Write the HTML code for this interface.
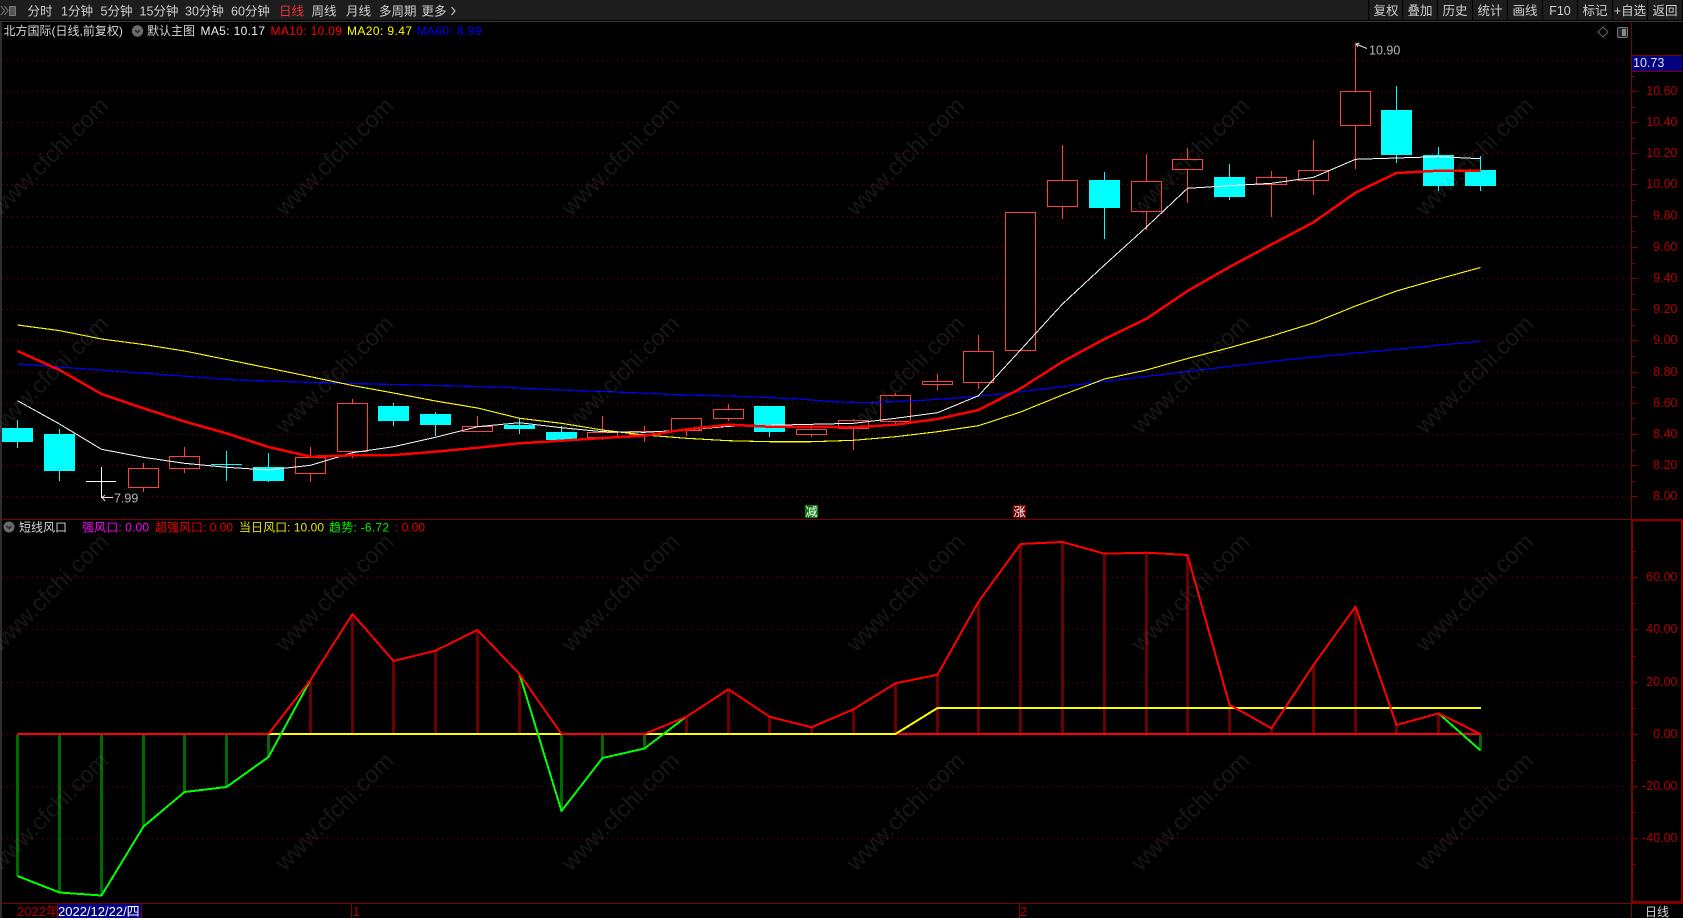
<!DOCTYPE html>
<html lang="zh">
<head>
<meta charset="utf-8">
<title>北方国际 日线</title>
<style>
html,body{margin:0;padding:0;background:#000;width:1683px;height:918px;overflow:hidden}
svg{display:block;position:absolute;left:0;top:0}
text{font-family:"Liberation Sans","Noto Sans CJK SC",sans-serif;font-size:12px}
.c{shape-rendering:crispEdges}
.t text{font-size:12.5px}
.a text{font-size:12.5px}
.w text{font-size:23.5px}
</style>
</head>
<body>
<svg width="1683" height="918" viewBox="0 0 1683 918" xmlns="http://www.w3.org/2000/svg">
<rect width="1683" height="918" fill="#000"/>
<!-- toolbar -->
<g class="c">
<rect x="0" y="0" width="1683" height="20" fill="#1d1d1d"/>
<rect x="0" y="20" width="1683" height="1" fill="#000"/>
<rect x="0" y="21" width="1683" height="1" fill="#3a3a3a"/>
<rect x="0" y="22" width="2" height="896" fill="#2e2e2e"/>
<path d="M1368.5 0V20M1402.5 0V20M1437.5 0V20M1472.5 0V20M1507.5 0V20M1542.5 0V20M1577.5 0V20M1612.5 0V20M1647.5 0V20M1682.5 0V20" stroke="#000"/>
</g>
<path d="M1 6L4.500 10.500L1 15M4.500 6L8 10.500L4.500 15" fill="none" stroke="#777" stroke-width="1"/>
<rect x="9.500" y="6.500" width="6" height="9" fill="#555" stroke="#777"/>
<g class="t" fill="#cfcfcf">
<text x="27.500" y="15.500">分时</text>
<text x="61" y="15.500">1分钟</text>
<text x="100.500" y="15.500">5分钟</text>
<text x="139.500" y="15.500">15分钟</text>
<text x="185" y="15.500">30分钟</text>
<text x="231" y="15.500">60分钟</text>
<text x="279" y="15.500" fill="#ee3333">日线</text>
<text x="311.500" y="15.500">周线</text>
<text x="346" y="15.500">月线</text>
<text x="379" y="15.500">多周期</text>
<text x="421.500" y="15.500">更多</text>
</g>
<path d="M451.500 7L455 11L451.500 15" fill="none" stroke="#cfcfcf"/>
<g class="t" fill="#cfcfcf" text-anchor="middle">
<text x="1386" y="15">复权</text>
<text x="1420" y="15">叠加</text>
<text x="1455" y="15">历史</text>
<text x="1490" y="15">统计</text>
<text x="1525" y="15">画线</text>
<text x="1560" y="15">F10</text>
<text x="1595" y="15">标记</text>
<text x="1630" y="15">+自选</text>
<text x="1665" y="15">返回</text>
</g>
<!-- grid -->
<g class="c" stroke="#800000" stroke-dasharray="1 4" fill="none">
<path d="M2 60.500H1631M2 91.500H1631M2 122.500H1631M2 153.500H1631M2 184.500H1631M2 216.500H1631M2 247.500H1631M2 278.500H1631M2 309.500H1631M2 340.500H1631M2 372.500H1631M2 403.500H1631M2 434.500H1631M2 465.500H1631M2 496.500H1631"/>
<path d="M2 577.500H1631M2 629.500H1631M2 682.500H1631M2 734.500H1631M2 786.500H1631M2 838.500H1631"/>
</g>
<!-- frame + axis -->
<g class="c" stroke="#800000" fill="none">
<path d="M0 519.500H1683M0 903.500H1683"/>
<path d="M1631.500 21V520M1631.500 903V918"/>
<rect x="1632" y="520.500" width="50" height="381.500" stroke-width="2"/>
<path d="M1632 91.500h6M1632 122.500h6M1632 153.500h6M1632 184.500h6M1632 216.500h6M1632 247.500h6M1632 278.500h6M1632 309.500h6M1632 340.500h6M1632 372.500h6M1632 403.500h6M1632 434.500h6M1632 465.500h6M1632 496.500h6"/>
<path d="M1632 76.500h3M1632 107.500h3M1632 138.500h3M1632 169.500h3M1632 200.500h3M1632 231.500h3M1632 263.500h3M1632 294.500h3M1632 325.500h3M1632 356.500h3M1632 387.500h3M1632 418.500h3M1632 450.500h3M1632 481.500h3"/>
<path d="M1633 577.500h5M1633 629.500h5M1633 682.500h5M1633 734.500h5M1633 786.500h5M1633 838.500h5"/>
<path d="M1633 551.500h3M1633 603.500h3M1633 656.500h3M1633 708.500h3M1633 760.500h3M1633 812.500h3M1633 864.500h3"/>
</g>
<g class="a" fill="#b00000" text-anchor="end">
<text x="1677.500" y="95">10.60</text>
<text x="1677.500" y="126">10.40</text>
<text x="1677.500" y="157">10.20</text>
<text x="1677.500" y="188">10.00</text>
<text x="1677.500" y="219.500">9.80</text>
<text x="1677.500" y="251">9.60</text>
<text x="1677.500" y="282">9.40</text>
<text x="1677.500" y="313">9.20</text>
<text x="1677.500" y="344">9.00</text>
<text x="1677.500" y="376">8.80</text>
<text x="1677.500" y="407">8.60</text>
<text x="1677.500" y="438">8.40</text>
<text x="1677.500" y="469">8.20</text>
<text x="1677.500" y="500">8.00</text>
<text x="1677.500" y="581">60.00</text>
<text x="1677.500" y="633">40.00</text>
<text x="1677.500" y="686">20.00</text>
<text x="1677.500" y="738">0.00</text>
<text x="1677.500" y="790">-20.00</text>
<text x="1677.500" y="842">-40.00</text>
</g>
<g class="c">
<rect x="1632" y="55" width="50" height="17" fill="#000080"/>
<path d="M1632 55.500H1682M1632 71.500H1682" stroke="#800000"/>
</g>
<text x="1633" y="67" fill="#e0e0e0" style="font-size:12.5px">10.73</text>
<!-- header -->
<text x="3.500" y="35" fill="#d8d8d8">北方国际(日线,前复权)</text>
<circle cx="137.500" cy="31" r="5.700" fill="#6b6b6b"/>
<path d="M135 30L137.500 32.500L140 30" fill="none" stroke="#222" stroke-width="1.300"/>
<text x="147" y="35" fill="#d8d8d8">默认主图</text>
<text x="200.500" y="35" fill="#f0f0f0" textLength="64.500">MA5: 10.17</text>
<text x="270.500" y="35" fill="#ff0000" textLength="71.500">MA10: 10.09</text>
<text x="347" y="35" fill="#ffff00" textLength="65">MA20: 9.47</text>
<text x="416.500" y="35" fill="#0000ff" textLength="65">MA60: 8.99</text>
<path d="M1603 27L1608 32L1603 37L1598 32Z" fill="none" stroke="#666"/>
<rect x="1617.500" y="27.500" width="10" height="10" rx="1.500" fill="#222" stroke="#777"/>
<rect x="1622" y="29" width="4" height="7" fill="#888"/>
<!-- candles: wicks -->
<g class="c" stroke="#00ffff" fill="none">
<path d="M17.500 420V448M59.500 429V481M268.500 453V482M393.500 403V426M435.500 412V436M519.500 418V434M561.500 426V441M769.500 406V437M1104.500 172V239M1229.500 164V200M1396.500 86V163M1438.500 147V191M1480.500 156V191"/>
<path d="M226.500 451V481M211 464.500H242"/>
</g>
<g class="c" fill="#00ffff">
<rect x="2" y="428" width="31" height="14"/>
<rect x="44" y="434" width="31" height="37"/>
<rect x="253" y="467" width="31" height="14"/>
<rect x="378" y="406" width="31" height="15"/>
<rect x="420" y="414" width="31" height="11"/>
<rect x="504" y="425" width="31" height="4"/>
<rect x="546" y="432" width="31" height="8"/>
<rect x="754" y="406" width="31" height="26"/>
<rect x="1089" y="180" width="31" height="28"/>
<rect x="1214" y="177" width="31" height="20"/>
<rect x="1381" y="110" width="31" height="45"/>
<rect x="1423" y="155" width="31" height="31"/>
<rect x="1465" y="170" width="31" height="16"/>
</g>
<g class="c" stroke="#ff4040" fill="none">
<path d="M143.500 463V492M184.500 447V473M310.500 447V482M352.500 399V458M477.500 416V432M602.500 416V440M644.500 426V442M686.500 418V436M728.500 404V421M811.500 425V437M853.500 419V450M895.500 393V424M937.500 374V390M978.500 335V389M1062.500 145V219M1146.500 154V230M1187.500 148V203M1271.500 171V217M1313.500 140V195M1355.500 43V169"/>
</g>
<g class="c" stroke="#ff4040" fill="#000">
<rect x="128.500" y="468.500" width="30" height="19"/>
<rect x="169.500" y="456.500" width="30" height="12"/>
<rect x="295.500" y="457.500" width="30" height="16"/>
<rect x="337.500" y="403.500" width="30" height="48"/>
<rect x="462.500" y="426.500" width="30" height="5"/>
<rect x="587.500" y="432.500" width="30" height="5"/>
<rect x="629.500" y="431.500" width="30" height="3"/>
<rect x="671.500" y="418.500" width="30" height="12"/>
<rect x="713.500" y="409.500" width="30" height="9"/>
<rect x="796.500" y="429.500" width="30" height="5"/>
<rect x="838.500" y="420.500" width="30" height="8"/>
<rect x="880.500" y="395.500" width="30" height="26"/>
<rect x="922.500" y="381.500" width="30" height="3"/>
<rect x="963.500" y="351.500" width="30" height="31"/>
<rect x="1005.500" y="212.500" width="30" height="138"/>
<rect x="1047.500" y="180.500" width="30" height="26"/>
<rect x="1131.500" y="181.500" width="30" height="30"/>
<rect x="1172.500" y="159.500" width="30" height="10"/>
<rect x="1256.500" y="177.500" width="30" height="7"/>
<rect x="1298.500" y="170.500" width="30" height="10"/>
<rect x="1340.500" y="91.500" width="30" height="34"/>
</g>
<path class="c" d="M86 481.500H116M101.500 467V498" stroke="#fff" fill="none"/>
<!-- MA lines -->
<g class="c" fill="none" stroke-linejoin="round">
<polyline stroke="#0000ff" stroke-width="1.200" points="17.500,364 100,370 237,380 330,383 500,387 542,389.300 583,390.700 633,392.700 667,394.300 750,396.700 800,399 833,401.700 867,402.700 917,400.700 967,397.300 1000,394.300 1124,379 1288,359.500 1480.500,341.300"/>
<polyline stroke="#ffff00" stroke-width="1.100" points="17.500,325 59.500,330.600 101.500,339 143.500,344.500 184.500,351 226.500,359.500 268.500,368 310.500,376.700 352.500,385.500 393.500,393 435.500,401 477.500,408 519.500,418.300 561.500,423.300 602.500,430 644.500,435 686.500,438.300 728.500,440.700 769.500,441.700 811.500,441.700 853.500,440.300 895.500,436.700 937.500,431.700 978.500,425.700 1020.500,412 1062.500,395 1104.500,379 1146.500,370 1187.500,358.500 1229.500,347.700 1271.500,336 1313.500,323 1355.500,306 1396.500,291 1438.500,279 1480.500,267.500"/>
<polyline stroke="#ffffff" stroke-width="1" points="17.500,400.700 59.500,424 101.500,449.300 143.500,457.300 184.500,463.300 226.500,467.300 268.500,470 310.500,465.300 352.500,452.700 393.500,446.700 435.500,437.300 477.500,426.700 519.500,422.700 561.500,427.700 602.500,431.700 644.500,432.300 686.500,430 728.500,426.300 769.500,425.300 811.500,424.300 853.500,423.300 895.500,418.300 937.500,412.700 978.500,395.700 1020.500,350 1062.500,304 1104.500,265 1146.500,227 1187.500,188.300 1229.500,185.700 1271.500,183.300 1313.500,177.300 1355.500,159.300 1396.500,158 1438.500,156.700 1480.500,158.700"/>
<polyline stroke="#ff0000" stroke-width="2.500" points="17.500,351 59.500,370 101.500,394 143.500,408.300 184.500,421.500 226.500,433.300 268.500,447 310.500,456.700 352.500,455.300 393.500,455 435.500,451.700 477.500,447.700 519.500,443.300 561.500,440.700 602.500,438 644.500,435.700 686.500,429.300 728.500,424.700 769.500,426.700 811.500,426.700 853.500,427.300 895.500,424.700 937.500,419 978.500,410 1020.500,388.500 1062.500,361.700 1104.500,339 1146.500,318.700 1187.500,291 1229.500,267 1271.500,244.500 1313.500,222.300 1355.500,192.700 1396.500,173 1438.500,170.700 1480.500,170.700"/>
</g>
<!-- high / low annotations -->
<path d="M1356 44L1367 48.500M1356 44L1359.500 43M1356 44L1358 47" fill="none" stroke="#ddd"/>
<text x="1369" y="54.500" fill="#b8b8b8" style="font-size:12.5px">10.90</text>
<path d="M102 497.500H113M102 497.500L105 495M102 497.500L105 501" fill="none" stroke="#ddd"/>
<text x="114" y="502.500" fill="#b8b8b8" style="font-size:12.5px">7.99</text>
<!-- markers -->
<rect class="c" x="805" y="505" width="13" height="13" fill="#0a7a10"/>
<text x="811.500" y="516" fill="#fff" text-anchor="middle">减</text>
<rect class="c" x="1013" y="505" width="13" height="13" fill="#7a0000"/>
<text x="1019.500" y="516" fill="#fff" text-anchor="middle">涨</text>
<!-- lower header -->
<circle cx="9" cy="527" r="5.500" fill="#6b6b6b"/>
<path d="M6.500 526L9 528.500L11.500 526" fill="none" stroke="#222" stroke-width="1.300"/>
<text x="19" y="531.500" fill="#d8d8d8">短线风口</text>
<text x="82" y="531.500" fill="#ff00ff" textLength="67">强风口: 0.00</text>
<text x="155" y="531.500" fill="#ee0000" textLength="78">超强风口: 0.00</text>
<text x="239" y="531.500" fill="#e6e600" textLength="85">当日风口: 10.00</text>
<text x="329" y="531.500" fill="#00ee00" textLength="60">趋势: -6.72</text>
<text x="395" y="531.500" fill="#ee0000">: 0.00</text>
<!-- lower bars -->
<g class="c" fill="#006a00">
<rect x="16" y="735" width="3" height="141"/>
<rect x="58" y="735" width="3" height="157"/>
<rect x="100" y="735" width="3" height="160"/>
<rect x="142" y="735" width="3" height="92"/>
<rect x="183" y="735" width="3" height="57"/>
<rect x="225" y="735" width="3" height="52"/>
<rect x="267" y="735" width="3" height="22"/>
<rect x="560" y="735" width="3" height="76"/>
<rect x="601" y="735" width="3" height="23"/>
<rect x="643" y="735" width="3" height="14"/>
<rect x="1479" y="735" width="3" height="15"/>
</g>
<g class="c" fill="#6a0000">
<rect x="309" y="680" width="3" height="54"/>
<rect x="351" y="614" width="3" height="120"/>
<rect x="392" y="661" width="3" height="73"/>
<rect x="434" y="651" width="3" height="83"/>
<rect x="476" y="630" width="3" height="104"/>
<rect x="518" y="674" width="3" height="60"/>
<rect x="685" y="717" width="3" height="17"/>
<rect x="727" y="689" width="3" height="45"/>
<rect x="768" y="717" width="3" height="17"/>
<rect x="810" y="727" width="3" height="7"/>
<rect x="852" y="709" width="3" height="25"/>
<rect x="894" y="683" width="3" height="51"/>
<rect x="936" y="675" width="3" height="59"/>
<rect x="977" y="602" width="3" height="132"/>
<rect x="1019" y="544" width="3" height="190"/>
<rect x="1061" y="542" width="3" height="192"/>
<rect x="1103" y="554" width="3" height="180"/>
<rect x="1145" y="553" width="3" height="181"/>
<rect x="1186" y="555" width="3" height="179"/>
<rect x="1228" y="705" width="3" height="29"/>
<rect x="1270" y="728" width="3" height="6"/>
<rect x="1312" y="665" width="3" height="69"/>
<rect x="1354" y="607" width="3" height="127"/>
<rect x="1395" y="725" width="3" height="9"/>
<rect x="1437" y="713" width="3" height="21"/>
</g>
<!-- lower lines -->
<g class="c" fill="none" stroke-width="2" stroke-linejoin="round">
<path d="M17 734H1481" stroke="#ff0000"/>
<polyline stroke="#ffff00" points="268.500,734 895.500,734 937.500,708 1481,708"/>
<path stroke="#00ff00" d="M17.500 876L59.500 892.500L101.500 895.500L143.500 826.500L184.500 792L226.500 787L268.500 757L310.500 680M519.500 674L561.500 811L602.500 758L644.500 748.500L686.500 716.500M1438.500 713.300L1480.500 750.500"/>
<polyline stroke="#ff0000" points="268.500,734 310.500,680 352.500,614 393.500,661 435.500,650.700 477.500,630 519.500,674 561.500,734 644.500,734 686.500,716.700 728.500,689.300 769.500,716.700 811.500,727.300 853.500,709.300 895.500,683.300 937.500,674.700 978.500,601.700 1020.500,544 1062.500,542 1104.500,553.700 1146.500,552.700 1187.500,555 1229.500,704.700 1271.500,728.300 1313.500,665 1355.500,606.700 1396.500,725 1438.500,713.300 1480.500,734"/>
</g>
<!-- bottom bar -->
<g class="c">
<path d="M351.500 904V918M1019.500 904V918" stroke="#800000"/>
<rect x="58" y="904" width="83.500" height="14" fill="#000080"/>
<path d="M57.500 904V918M141.500 904V918" stroke="#800000"/>
</g>
<text x="17" y="916" fill="#b00000" style="font-size:13px">2022年</text>
<text x="58" y="916" fill="#ffffff" style="font-size:13px">2022/12/22/四</text>
<text x="352.500" y="916" fill="#b00000" style="font-size:13px">1</text>
<text x="1020" y="916" fill="#b00000" style="font-size:13px">2</text>
<text x="1645" y="916" fill="#d8d8d8">日线</text>
<!-- watermark -->
<g class="w" fill="#808080" fill-opacity="0.18">
<text transform="translate(1425 217) rotate(-45)">www.cfchi.com</text>
<text transform="translate(1141 217) rotate(-45)">www.cfchi.com</text>
<text transform="translate(856 217) rotate(-45)">www.cfchi.com</text>
<text transform="translate(571 217) rotate(-45)">www.cfchi.com</text>
<text transform="translate(285 217) rotate(-45)">www.cfchi.com</text>
<text transform="translate(0 217) rotate(-45)">www.cfchi.com</text>
<text transform="translate(1425 435) rotate(-45)">www.cfchi.com</text>
<text transform="translate(1141 435) rotate(-45)">www.cfchi.com</text>
<text transform="translate(856 435) rotate(-45)">www.cfchi.com</text>
<text transform="translate(571 435) rotate(-45)">www.cfchi.com</text>
<text transform="translate(285 435) rotate(-45)">www.cfchi.com</text>
<text transform="translate(0 435) rotate(-45)">www.cfchi.com</text>
<text transform="translate(1425 653) rotate(-45)">www.cfchi.com</text>
<text transform="translate(1141 653) rotate(-45)">www.cfchi.com</text>
<text transform="translate(856 653) rotate(-45)">www.cfchi.com</text>
<text transform="translate(571 653) rotate(-45)">www.cfchi.com</text>
<text transform="translate(285 653) rotate(-45)">www.cfchi.com</text>
<text transform="translate(0 653) rotate(-45)">www.cfchi.com</text>
<text transform="translate(1425 872) rotate(-45)">www.cfchi.com</text>
<text transform="translate(1141 872) rotate(-45)">www.cfchi.com</text>
<text transform="translate(856 872) rotate(-45)">www.cfchi.com</text>
<text transform="translate(571 872) rotate(-45)">www.cfchi.com</text>
<text transform="translate(285 872) rotate(-45)">www.cfchi.com</text>
<text transform="translate(0 872) rotate(-45)">www.cfchi.com</text>
</g>
</svg>
</body>
</html>
